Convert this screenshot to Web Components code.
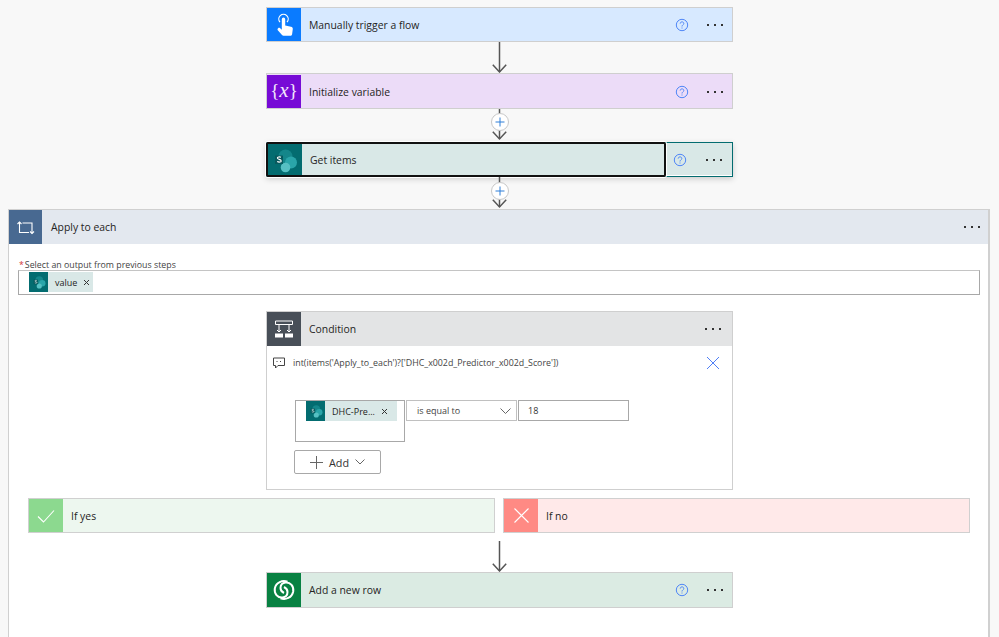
<!DOCTYPE html>
<html>
    <head>
        <style>
            html, body { margin: 0; padding: 0; background: #f8f8f8; }
            body { font-family: "Open Sans", "Liberation Sans", sans-serif; color: #252423; height: 637px; overflow: hidden; }
            flow-canvas { padding-top: 7px; }
        </style>
    </head>
    <body>
        <flow-canvas>
            <flow-card label="Manually trigger a flow" color="#0a7bff" tint="#d7e9ff" help>
                <svg slot="icon" width="20" height="24" viewBox="0 0 20 24"><path d="M6 9.200a4.700 4.700 0 1 1 7 0" fill="none" stroke="#fff" stroke-width="1.200"/><path d="M7.800 6.200a1.700 1.700 0 0 1 3.400 0v6.300l5.800 1.200c1.200.3 1.900 1.200 1.800 2.400l-.7 5.200c-.1.9-.7 1.500-1.600 1.500H9.500c-.6 0-1.100-.3-1.500-.7L4 17.500c-.7-.8-.6-1.800.1-2.300.7-.5 1.500-.4 2.100.1l1.600 1.500z" fill="#fff"/></svg>
            </flow-card>
            <flow-arrow h="31"></flow-arrow>
            <flow-card label="Initialize variable" color="#770bd6" tint="#ecdcf8" style="height:36px;padding-top:1px">
                <span slot="icon" style="color:#f3e8fc;font:19px 'Liberation Serif',serif;white-space:nowrap;margin-top:-3px">{<i style="font-size:21px">x</i>}</span>
            </flow-card>
            <flow-arrow h="33" plus="4"></flow-arrow>
            <flow-card label="Get items" color="#036c70" tint="#d9e8e7" selected>
                <sp-logo slot="icon" size="26"></sp-logo>
            </flow-card>
            <flow-arrow h="32" plus="5"></flow-arrow>
            <apply-scope>
                <condition-card></condition-card>
                <branch-row></branch-row>
                <flow-arrow h="31" style="margin-top:8px"></flow-arrow>
                <flow-card label="Add a new row" color="#088142" tint="#dbebe3" style="height:36px">
                    <svg slot="icon" width="22" height="22" viewBox="0 0 22 22" fill="none" stroke="#fff" stroke-width="2"><path d="M14.500 2.800C9.500 .8 3 3.200 1.800 9.500C1 14.500 4.500 19 9.500 18.500C12.500 18.200 14.500 16 14.500 13C14.500 11 13 9 11 8"/><path d="M14.500 2.800C9.500 .8 3 3.200 1.800 9.500C1 14.500 4.500 19 9.500 18.500C12.500 18.200 14.500 16 14.500 13C14.500 11 13 9 11 8" transform="rotate(180 11 11)"/></svg>
                </flow-card>
            </apply-scope>
        </flow-canvas>

        <script>
            const dots = `<svg width="16" height="4" viewBox="0 0 16 4" fill="#333"><rect x="0" y="1" width="2" height="2"/><rect x="7" y="1" width="2" height="2"/><rect x="14" y="1" width="2" height="2"/></svg>`;
            const help = `<svg width="14" height="14" viewBox="0 0 14 14" fill="none"><circle cx="7" cy="7" r="5.700" stroke="#4f86f7"/><path d="M5.200 5.600c0-2.300 3.600-2.300 3.600-.1 0 1.400-1.800 1.400-1.800 3" stroke="#4f86f7"/><rect x="6.500" y="9.500" width="1" height="1" fill="#4f86f7"/></svg>`;

            class FlowCanvas extends HTMLElement {
                constructor() {
                    super();
                    const shadowRoot = this.attachShadow({ mode: 'open' });
                    shadowRoot.innerHTML = `
                        <style>
                            :host { display: flex; flex-direction: column; align-items: center; }
                        </style>
                        <slot></slot>
                    `;
                }
            }
            window.customElements.define('flow-canvas', FlowCanvas);

            class SpLogo extends HTMLElement {
                constructor() {
                    super();
                    const size = this.getAttribute('size') || 26;
                    const shadowRoot = this.attachShadow({ mode: 'open' });
                    shadowRoot.innerHTML = `
                        <style>
                            :host { display: block; line-height: 0; }
                        </style>
                        <svg width="${size}" height="${size}" viewBox="0 0 26 26">
                            <circle cx="13.500" cy="9.500" r="7" fill="#14868a"/>
                            <circle cx="19" cy="15.500" r="6" fill="#2aa5a9"/>
                            <circle cx="13.500" cy="20.500" r="4.800" fill="#56c0c3"/>
                            <rect x="3" y="8.500" width="8" height="8.500" rx=".6" fill="#07595d"/>
                            <path d="M9 10.300c-1.500-.7-3.600-.5-3.600.8 0 1.600 3.800 1 3.800 2.800 0 1.300-2.300 1.500-4 .7" fill="none" stroke="#fff" stroke-width="1.100"/>
                        </svg>
                    `;
                }
            }
            window.customElements.define('sp-logo', SpLogo);

            class FlowCard extends HTMLElement {
                constructor() {
                    super();
                    const shadowRoot = this.attachShadow({ mode: 'open' });
                    const tint = this.getAttribute('tint');
                    const color = this.getAttribute('color');
                    shadowRoot.innerHTML = `
                        <style>
                            :host { display: flex; width: 467px; height: 35px; box-sizing: border-box; flex: none; background: ${tint}; border: 1px solid #cfcfcf; font-size: 10.400px; color: #252423; }
                            :host([selected]) { border-color: #036c70; box-shadow: 0 2px 6px rgba(0,0,0,.18); }
                            .main { flex: 1; display: flex; align-items: center; min-width: 0; }
                            :host([selected]) .main { margin: -1px 0 -1px -1px; border: 2px solid #111; border-radius: 2px; box-shadow: 0 0 0 1px #fff; }
                            .icon { width: 34px; align-self: stretch; background: ${color}; display: flex; align-items: center; justify-content: center; flex: none; }
                            .label { padding-left: 8px; white-space: nowrap; }
                            .tools { width: 65px; display: flex; align-items: center; flex: none; box-sizing: border-box; padding-left: 8px; gap: 18px; }
                            :host([selected]) .tools { width: 66px; padding-left: 7px; gap: 19px; box-shadow: inset 1px -1px 0 #fff; }
                            .help { width: 14px; height: 14px; line-height: 0; }
                            .dots { line-height: 0; }
                        </style>
                        <div class="main">
                            <div class="icon"><slot name="icon"></slot></div>
                            <div class="label">${this.getAttribute('label')}</div>
                        </div>
                        <div class="tools">
                            <div class="help">${help}</div>
                            <div class="dots">${dots}</div>
                        </div>
                    `;
                }
            }
            window.customElements.define('flow-card', FlowCard);

            class FlowArrow extends HTMLElement {
                constructor() {
                    super();
                    const shadowRoot = this.attachShadow({ mode: 'open' });
                    const plus = this.getAttribute('plus');
                    const h = Number(this.getAttribute('h') || 31);
                    shadowRoot.innerHTML = `
                        <style>
                            :host { display: block; width: 18px; height: ${h}px; flex: none; position: relative; }
                            svg { display: block; }
                            .plus { position: absolute; left: 0; top: ${plus}px; width: 18px; height: 18px; box-sizing: border-box; border-radius: 50%; background: #fff; border: 1px solid #c8c8c8; display: flex; align-items: center; justify-content: center; }
                        </style>
                        <svg width="18" height="${h}" viewBox="0 0 18 ${h}" fill="none" stroke="#555" stroke-width="1.500">
                            <path d="M8.500 0V30"/><path d="M1.800 22.800L8.500 30L15.200 22.800"/>
                        </svg>
                        ${plus ? `<div class="plus"><svg width="10" height="10" viewBox="0 0 10 10" stroke="#2f7fd8" fill="none"><path d="M5 .5V9.500M.5 5H9.500"/></svg></div>` : ''}
                    `;
                }
            }
            window.customElements.define('flow-arrow', FlowArrow);

            class TokenChip extends HTMLElement {
                constructor() {
                    super();
                    const shadowRoot = this.attachShadow({ mode: 'open' });
                    const end = this.getAttribute('end') || 3;
                    shadowRoot.innerHTML = `
                        <style>
                            :host { display: inline-flex; height: 20px; background: #d9e8e7; align-items: center; font-size: 9px; color: #252423; white-space: nowrap; }
                            .logo { width: 19px; height: 20px; background: #036c70; display: flex; align-items: center; justify-content: center; }
                            .text { padding-left: 7px; }
                            .x { padding: 0 ${end}px 0 6px; width: 7px; line-height: 0; }
                        </style>
                        <div class="logo"><sp-logo size="14"></sp-logo></div>
                        <div class="text"><slot></slot></div>
                        <div class="x"><svg width="7" height="7" viewBox="0 0 7 7" stroke="#333" fill="none"><path d="M1 1L6 6M6 1L1 6"/></svg></div>
                    `;
                }
            }
            window.customElements.define('token-chip', TokenChip);

            class ApplyScope extends HTMLElement {
                constructor() {
                    super();
                    const shadowRoot = this.attachShadow({ mode: 'open' });
                    shadowRoot.innerHTML = `
                        <style>
                            :host { display: block; align-self: flex-start; margin-left: 8px; width: 982px; box-sizing: border-box; background: #fff; border: 1px solid #d0d0d0; border-right-width: 2px; border-bottom: 0; height: 428px; flex: none; }
                            .head { display: flex; align-items: center; height: 34px; background: #e3e8ef; font-size: 10.400px; }
                            .icon { width: 33px; height: 34px; background: #486991; display: flex; align-items: center; justify-content: center; }
                            .label { padding-left: 9px; flex: 1; }
                            .dots { padding-right: 8px; line-height: 0; }
                            .body { padding: 15px 8px 16px 9px; }
                            .cap { font-size: 8.800px; line-height: 11px; color: #444; padding: 1px 0 0 1px; margin-bottom: -1px; white-space: nowrap; }
                            .cap b { color: #d13438; font-weight: 400; margin-right: 1px; }
                            .input { height: 25px; box-sizing: border-box; border: 1px solid #a8a8a8; border-top-color: #c4c4c4; background: #fff; padding: 1px 0 0 10px; display: flex; }
                            .inner { display: flex; flex-direction: column; align-items: center; padding-left: 2px; }
                        </style>
                        <div class="head">
                            <div class="icon"><svg width="18" height="16" viewBox="0 0 18 16" fill="none" stroke="#fff" stroke-width="1.100"><path d="M2.500 3V13.500H12"/><path d="M5.500 4H15V14.500"/><path d="M.5 5L2.500 3L4.500 5"/><path d="M13 12.500L15 14.500L17 12.500"/></svg></div>
                            <div class="label">Apply to each</div>
                            <div class="dots">${dots}</div>
                        </div>
                        <div class="body">
                            <div class="cap"><b>*</b>Select an output from previous steps</div>
                            <div class="input"><token-chip>value</token-chip></div>
                        </div>
                        <div class="inner"><slot></slot></div>
                    `;
                }
            }
            window.customElements.define('apply-scope', ApplyScope);

            class ConditionCard extends HTMLElement {
                constructor() {
                    super();
                    const shadowRoot = this.attachShadow({ mode: 'open' });
                    shadowRoot.innerHTML = `
                        <style>
                            :host { display: block; width: 467px; height: 179px; flex: none; box-sizing: border-box; border: 1px solid #cfcfcf; background: #fff; }
                            .head { display: flex; align-items: center; height: 34px; background: #e3e4e5; font-size: 10.400px; }
                            .icon { width: 34px; height: 34px; background: #484f58; display: flex; align-items: center; justify-content: center; }
                            .label { padding-left: 8px; flex: 1; }
                            .dots { padding-right: 11px; line-height: 0; }
                            .note { display: flex; align-items: center; height: 34px; padding: 0 12px 0 6px; font-size: 8.850px; color: #444; gap: 8px; }
                            .note span { flex: 1; white-space: nowrap; }
                            .row { display: flex; align-items: flex-start; gap: 1px; padding: 20px 0 0 28px; }
                            .left { width: 110px; height: 42px; box-sizing: border-box; border: 1px solid #a8a8a8; padding: 0 0 0 10px; display: flex; align-items: flex-start; }
                            .op { width: 111px; height: 21px; box-sizing: border-box; border: 1px solid #c0c0c0; display: flex; align-items: center; justify-content: space-between; padding: 0 5px 0 10px; font-size: 9px; color: #444; }
                            .val { width: 111px; height: 21px; box-sizing: border-box; border: 1px solid #a8a8a8; display: flex; align-items: center; padding-left: 9px; font-size: 9px; color: #333; }
                            .add { display: flex; align-items: center; margin: 8px 0 0 27px; width: 87px; height: 24px; box-sizing: border-box; border: 1px solid #a8a8a8; border-radius: 2px; font-size: 10.800px; color: #333; padding-left: 15px; gap: 6px; }
                        </style>
                        <div class="head">
                            <div class="icon"><svg width="20" height="20" viewBox="0 0 20 20" fill="none" stroke="#fff"><path d="M1.500 2H18.500V5.500H1.500z"/><path d="M5 5.500V13M15 5.500V13"/><path d="M3 11L5 13L7 11M13 11L15 13L17 11"/><path d="M1 14.500H9V18.500H1zM11 14.500H19V18.500H11z" fill="#fff" stroke="none"/></svg></div>
                            <div class="label">Condition</div>
                            <div class="dots">${dots}</div>
                        </div>
                        <div class="note">
                            <svg width="12" height="12" viewBox="0 0 12 12" fill="none" stroke="#444"><path d="M.5 1H11.500V8.500H5L2.500 11V8.500H.5z"/><path d="M3.500 4.500H4.500M7 4.500H8"/></svg>
                            <span>int(items('Apply_to_each')?['DHC_x002d_Predictor_x002d_Score'])</span>
                            <svg width="14" height="14" viewBox="0 0 14 14" stroke="#4f7ff7" fill="none"><path d="M1 1L13 13M13 1L1 13"/></svg>
                        </div>
                        <div class="row">
                            <div class="left"><token-chip end="9">DHC-Pre...</token-chip></div>
                            <div class="op">is equal to <svg width="11" height="6" viewBox="0 0 11 6" fill="none" stroke="#666"><path d="M.5 .5L5.500 5.500L10.500 .5"/></svg></div>
                            <div class="val">18</div>
                        </div>
                        <div class="add">
                            <svg width="13" height="13" viewBox="0 0 13 13" stroke="#666" fill="none"><path d="M6.500 0V13M0 6.500H13"/></svg>
                            Add
                            <svg width="10" height="6" viewBox="0 0 10 6" fill="none" stroke="#666"><path d="M.5 .5L5 5L9.500 .5"/></svg>
                        </div>
                    `;
                }
            }
            window.customElements.define('condition-card', ConditionCard);

            class BranchRow extends HTMLElement {
                constructor() {
                    super();
                    const shadowRoot = this.attachShadow({ mode: 'open' });
                    shadowRoot.innerHTML = `
                        <style>
                            :host { display: flex; gap: 8px; margin: 8px 0 0 -1px; flex: none; }
                            .b { width: 467px; height: 35px; box-sizing: border-box; border: 1px solid #d0d0d0; display: flex; align-items: center; font-size: 10.400px; }
                            .yes { background: #edf7ef; }
                            .no { background: #ffe9e9; }
                            .icon { width: 34px; align-self: stretch; display: flex; align-items: center; justify-content: center; }
                            .yes .icon { background: #8cd98f; }
                            .no .icon { background: #ff8a84; }
                            .label { padding-left: 8px; }
                        </style>
                        <div class="b yes">
                            <div class="icon"><svg width="18" height="14" viewBox="0 0 18 14" fill="none" stroke="#fff" stroke-width="1.100"><path d="M1 7.500L6.500 13L17 1.500"/></svg></div>
                            <div class="label">If yes</div>
                        </div>
                        <div class="b no">
                            <div class="icon"><svg width="15" height="15" viewBox="0 0 15 15" fill="none" stroke="#fff" stroke-width="1.100"><path d="M.5 .5L14.500 14.500M14.500 .5L.5 14.500"/></svg></div>
                            <div class="label">If no</div>
                        </div>
                    `;
                }
            }
            window.customElements.define('branch-row', BranchRow);
        </script>
    </body>
</html>
